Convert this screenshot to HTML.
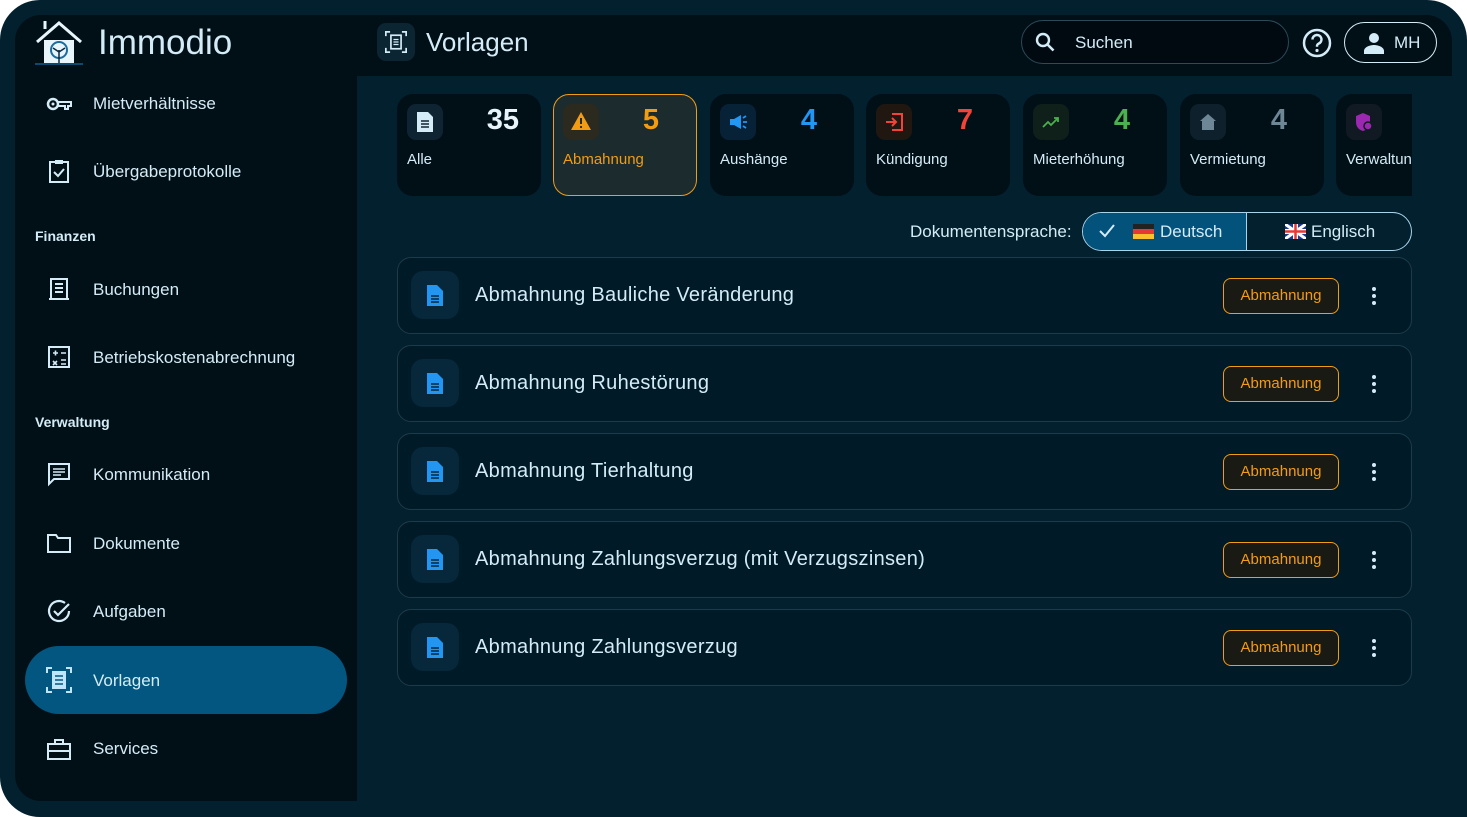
<!DOCTYPE html>
<html><head><meta charset="utf-8"><style>
*{box-sizing:border-box;margin:0;padding:0}
body{width:1467px;height:817px;background:#fff;font-family:"Liberation Sans",sans-serif;overflow:hidden;position:relative}
.frame{position:absolute;left:0;top:0;width:1467px;height:817px;background:#03202f;border-radius:40px}
.side{position:absolute;left:15px;top:15px;width:342px;height:786px;background:#010f17;border-radius:26px 0 0 26px}
.topbar{position:absolute;left:340px;top:15px;width:1112px;height:61px;background:#010f17;border-radius:0 26px 0 0}
.content{position:absolute;left:357px;top:76px;width:1110px;height:741px;background:#03202f;border-radius:40px 0 0 0}
.t{position:absolute;color:#d4ecf7;white-space:nowrap}
.nav{position:absolute;left:93px;font-size:17px;color:#d4ecf7}
.sec{position:absolute;left:35px;font-size:14px;font-weight:bold;color:#d4ecf7}
.ic{position:absolute;left:46px;width:26px;height:26px}
.card{position:absolute;top:94px;width:144px;height:102px;background:#010f17;border-radius:16px;overflow:hidden}
.card .ib{position:absolute;left:10px;top:10px;width:36px;height:36px;border-radius:9px}
.card .n{position:absolute;right:22px;top:10px;font-size:29px;font-weight:bold}
.card .l{position:absolute;left:10px;top:57px;font-size:15px;color:#d4ecf7}
.row{position:absolute;left:397px;width:1015px;height:77px;border:1.5px solid #1d3a4a;border-radius:14px;background:#011a27}
.row .ib{position:absolute;left:13px;top:13px;width:48px;height:48px;border-radius:12px;background:#07273a}
.row .tx{position:absolute;left:77px;top:26px;font-size:20px;color:#d4ecf7;letter-spacing:.3px}
.badge{position:absolute;left:825px;top:20px;width:116px;height:36px;border:1.5px solid #f39c12;border-radius:8px;background:#1a1a14;color:#f39c12;font-size:15px;text-align:center;line-height:33px}
.dots{position:absolute;left:974px;top:29px;width:4px}
.dots i{display:block;width:4px;height:4px;border-radius:2px;background:#d4ecf7;margin-bottom:3px}
</style></head><body>
<div class="frame"></div>
<div class="side"></div>
<div class="topbar"></div>
<div class="content"></div>

<!-- logo -->
<svg style="position:absolute;left:33px;top:18px" width="52" height="50" viewBox="0 0 52 50"><path d="M4 24 L26 5 L48 24" fill="none" stroke="#e8f6fc" stroke-width="3"/><rect x="11" y="22" width="30" height="24" fill="#e8f6fc"/><path d="M12 3v8" stroke="#e8f6fc" stroke-width="3"/><circle cx="26" cy="32" r="8" fill="none" stroke="#1b6da0" stroke-width="2"/><path d="M26 46v-14M20 30l6 4 6-4" stroke="#0a2a3f" stroke-width="1.5" fill="none"/><path d="M2 46h48" stroke="#0a4a70" stroke-width="2"/></svg>
<div class="t" style="left:98px;top:23px;font-size:35px;color:#d4ecf7">Immodio</div>

<!-- sidebar -->
<svg class="ic" style="top:91px" viewBox="0 0 26 26"><circle cx="7" cy="13" r="5" fill="none" stroke="#d4ecf7" stroke-width="2.5"/><circle cx="7" cy="13" r="1.5" fill="#d4ecf7"/><path d="M12 11h13v4h-3v3h-3v-3h-7z" fill="none" stroke="#d4ecf7" stroke-width="2"/></svg>
<div class="nav" style="top:94px">Mietverhältnisse</div>
<svg class="ic" style="top:158px" viewBox="0 0 26 26"><rect x="4" y="4" width="18" height="20" fill="none" stroke="#d4ecf7" stroke-width="2"/><rect x="9" y="2" width="8" height="4" fill="#d4ecf7"/><path d="M8 14l4 4 6-7" fill="none" stroke="#d4ecf7" stroke-width="2"/></svg>
<div class="nav" style="top:162px">Übergabeprotokolle</div>
<div class="sec" style="top:228px">Finanzen</div>
<svg class="ic" style="top:276px" viewBox="0 0 26 26"><rect x="5" y="3" width="16" height="20" fill="none" stroke="#d4ecf7" stroke-width="2"/><path d="M9 8h8M9 12h8M9 16h8M3 23h20" stroke="#d4ecf7" stroke-width="2"/></svg>
<div class="nav" style="top:280px">Buchungen</div>
<svg class="ic" style="top:344px" viewBox="0 0 26 26"><rect x="3" y="3" width="20" height="20" fill="none" stroke="#d4ecf7" stroke-width="2"/><path d="M7 9h5M9.5 6.5v5M15 9h5M7 17l4 4M11 17l-4 4M15 16h5M15 20h5" stroke="#d4ecf7" stroke-width="1.6"/></svg>
<div class="nav" style="top:348px">Betriebskostenabrechnung</div>
<div class="sec" style="top:414px">Verwaltung</div>
<svg class="ic" style="top:461px" viewBox="0 0 26 26"><path d="M3 3h20v15H8l-5 5z" fill="none" stroke="#d4ecf7" stroke-width="2"/><path d="M7 8h12M7 11h12M7 14h8" stroke="#d4ecf7" stroke-width="1.6"/></svg>
<div class="nav" style="top:465px">Kommunikation</div>
<svg class="ic" style="top:530px" viewBox="0 0 26 26"><path d="M2 5h8l2 3h12v14H2z" fill="none" stroke="#d4ecf7" stroke-width="2"/></svg>
<div class="nav" style="top:534px">Dokumente</div>
<svg class="ic" style="top:598px" viewBox="0 0 26 26"><path d="M23 13a10 10 0 1 1-4-8" fill="none" stroke="#d4ecf7" stroke-width="2.2"/><path d="M8 13l4 4 11-11" fill="none" stroke="#d4ecf7" stroke-width="2.2"/></svg>
<div class="nav" style="top:602px">Aufgaben</div>
<div style="position:absolute;left:25px;top:646px;width:322px;height:68px;border-radius:34px;background:#02567f"></div>
<svg class="ic" style="top:667px" viewBox="0 0 26 26"><path d="M1 6V1h5M20 1h5v5M25 20v5h-5M6 25H1v-5" fill="none" stroke="#bfe6f8" stroke-width="2"/><rect x="6" y="4" width="14" height="18" fill="#bfe6f8"/><path d="M9 9h8M9 13h8M9 17h8" stroke="#02567f" stroke-width="1.6"/></svg>
<div class="nav" style="top:671px">Vorlagen</div>
<svg class="ic" style="top:736px" viewBox="0 0 26 26"><rect x="2" y="8" width="22" height="15" fill="none" stroke="#d4ecf7" stroke-width="2"/><path d="M9 8V4h8v4M2 15h22" stroke="#d4ecf7" stroke-width="2" fill="none"/></svg>
<div class="nav" style="top:739px">Services</div>

<!-- top bar -->
<div style="position:absolute;left:377px;top:23px;width:38px;height:38px;border-radius:9px;background:#0c2533"></div>
<svg style="position:absolute;left:385px;top:31px" width="22" height="22" viewBox="0 0 26 26"><path d="M1 6V1h5M20 1h5v5M25 20v5h-5M6 25H1v-5" fill="none" stroke="#d4ecf7" stroke-width="2"/><rect x="7" y="5" width="12" height="16" fill="none" stroke="#d4ecf7" stroke-width="2"/><path d="M10 10h6M10 13h6M10 16h6" stroke="#d4ecf7" stroke-width="1.5"/></svg>
<div class="t" style="left:426px;top:27px;font-size:26px">Vorlagen</div>
<div style="position:absolute;left:1021px;top:20px;width:268px;height:44px;border:1.5px solid #2b4a5a;border-radius:22px;background:#000a10"></div>
<svg style="position:absolute;left:1034px;top:31px" width="22" height="22" viewBox="0 0 22 22"><circle cx="9" cy="9" r="6" fill="none" stroke="#d4ecf7" stroke-width="2.4"/><path d="M13.5 13.5l6 6" stroke="#d4ecf7" stroke-width="2.6"/></svg>
<div class="t" style="left:1075px;top:33px;font-size:17px">Suchen</div>
<svg style="position:absolute;left:1301px;top:27px" width="32" height="32" viewBox="0 0 32 32"><circle cx="16" cy="16" r="13" fill="none" stroke="#d4ecf7" stroke-width="2.5"/><path d="M11.5 12.5a4.5 4.5 0 1 1 6 4.2c-1.3.6-1.5 1.3-1.5 3" fill="none" stroke="#d4ecf7" stroke-width="2.5"/><circle cx="16" cy="23.5" r="1.6" fill="#d4ecf7"/></svg>
<div style="position:absolute;left:1344px;top:22px;width:93px;height:41px;border:1.5px solid #d4ecf7;border-radius:21px"></div>
<svg style="position:absolute;left:1362px;top:31px" width="24" height="24" viewBox="0 0 24 24"><circle cx="12" cy="7" r="5" fill="#d4ecf7"/><path d="M2 23v-3c0-4 6-6 10-6s10 2 10 6v3z" fill="#d4ecf7"/></svg>
<div class="t" style="left:1394px;top:33px;font-size:17px">MH</div>

<!-- category cards -->
<div style="position:absolute;left:397px;top:94px;width:1015px;height:102px;overflow:hidden">
</div>
<div class="card" style="left:397px"><div class="ib" style="background:#0f2432"></div><svg style="position:absolute;left:19px;top:17px" width="18" height="22" viewBox="0 0 18 22"><path d="M1 1h11l5 5v15H1z" fill="#d4ecf7"/><path d="M5 10h8M5 13h8M5 16h8" stroke="#0f2432" stroke-width="1.5"/></svg><div class="n" style="color:#e8f4fa">35</div><div class="l">Alle</div></div>
<div class="card" style="left:553px;background:#1b2b2e;border:1.5px solid #f39c12"><div class="ib" style="left:9px;top:9px;background:#2c2a1e"></div><svg style="position:absolute;left:16px;top:16px" width="22" height="20" viewBox="0 0 22 20"><path d="M11 1L21 19H1z" fill="#f39c12"/><path d="M11 7v6" stroke="#1b2b2e" stroke-width="2"/><circle cx="11" cy="16" r="1.1" fill="#1b2b2e"/></svg><div class="n" style="color:#f39c12;top:9px;right:37px">5</div><div class="l" style="color:#f39c12;left:9px;top:56px">Abmahnung</div></div>
<div class="card" style="left:710px"><div class="ib" style="background:#072236"></div><svg style="position:absolute;left:18px;top:19px" width="20" height="18" viewBox="0 0 20 18"><path d="M2 6h4l7-4v14l-7-4H2z" fill="#2196f3"/><path d="M15 5l3-2M15 9h4M15 13l3 2" stroke="#2196f3" stroke-width="1.8"/></svg><div class="n" style="color:#2196f3;right:37px">4</div><div class="l">Aushänge</div></div>
<div class="card" style="left:866px"><div class="ib" style="background:#201810"></div><svg style="position:absolute;left:18px;top:18px" width="20" height="20" viewBox="0 0 20 20"><path d="M8 2h10v16H8" fill="none" stroke="#f44336" stroke-width="2"/><path d="M2 10h10M8 6l4 4-4 4" fill="none" stroke="#f44336" stroke-width="2"/></svg><div class="n" style="color:#f44336;right:37px">7</div><div class="l">Kündigung</div></div>
<div class="card" style="left:1023px"><div class="ib" style="background:#0f1f1a"></div><svg style="position:absolute;left:18px;top:20px" width="20" height="16" viewBox="0 0 20 16"><path d="M2 13l5-5 3 3 7-7M13 4h4v4" fill="none" stroke="#4caf50" stroke-width="1.8"/></svg><div class="n" style="color:#4caf50;right:37px">4</div><div class="l">Mieterhöhung</div></div>
<div class="card" style="left:1180px"><div class="ib" style="background:#0e202c"></div><svg style="position:absolute;left:19px;top:19px" width="18" height="18" viewBox="0 0 18 18"><path d="M9 1l8 7h-2v9H3V8H1z" fill="#6d8797"/></svg><div class="n" style="color:#6d8797;right:37px">4</div><div class="l">Vermietung</div></div>
<div style="position:absolute;left:1336px;top:94px;width:76px;height:102px;overflow:hidden"><div class="card" style="left:0;top:0"><div class="ib" style="background:#111a22"></div><svg style="position:absolute;left:18px;top:18px" width="20" height="20" viewBox="0 0 20 20"><path d="M9 1l7 3v6c0 5-3 8-7 9-4-1-7-4-7-9V4z" fill="#9c27b0"/><circle cx="14" cy="14" r="4" fill="#9c27b0" stroke="#111a22" stroke-width="1.5"/></svg><div class="l">Verwaltung</div></div></div>

<!-- language -->
<div class="t" style="left:910px;top:222px;font-size:17px">Dokumentensprache:</div>
<div style="position:absolute;left:1082px;top:212px;width:330px;height:39px;border:1.5px solid #a8d4ea;border-radius:20px;overflow:hidden">
<div style="position:absolute;left:0;top:0;width:164px;height:39px;background:#02527c;border-right:1.5px solid #a8d4ea"></div>
</div>
<svg style="position:absolute;left:1098px;top:223px" width="18" height="16" viewBox="0 0 18 16"><path d="M2 8l5 5 9-11" fill="none" stroke="#d4ecf7" stroke-width="2"/></svg>
<svg style="position:absolute;left:1133px;top:224px" width="21" height="15" viewBox="0 0 21 15"><rect width="21" height="5" fill="#222"/><rect y="5" width="21" height="5" fill="#e53935"/><rect y="10" width="21" height="5" fill="#fbc02d"/></svg>
<div class="t" style="left:1160px;top:222px;font-size:17px">Deutsch</div>
<svg style="position:absolute;left:1285px;top:224px" width="21" height="15" viewBox="0 0 21 15"><rect width="21" height="15" fill="#1a3a8a"/><path d="M0 0l21 15M21 0L0 15" stroke="#fff" stroke-width="3"/><path d="M10.5 0v15M0 7.5h21" stroke="#fff" stroke-width="5"/><path d="M10.5 0v15M0 7.5h21" stroke="#e53935" stroke-width="2.5"/></svg>
<div class="t" style="left:1311px;top:222px;font-size:17px">Englisch</div>

<!-- rows -->
<div class="row" style="top:257px"><div class="ib"></div><svg style="position:absolute;left:29px;top:27px" width="16" height="21" viewBox="0 0 16 21"><path d="M0 0h10l6 6v15H0z" fill="#2196f3"/><path d="M4 11h8M4 14h8M4 17h8" stroke="#07273a" stroke-width="1.4"/></svg><div class="tx">Abmahnung Bauliche Veränderung</div><div class="badge">Abmahnung</div><div class="dots"><i></i><i></i><i></i></div></div>
<div class="row" style="top:345px"><div class="ib"></div><svg style="position:absolute;left:29px;top:27px" width="16" height="21" viewBox="0 0 16 21"><path d="M0 0h10l6 6v15H0z" fill="#2196f3"/><path d="M4 11h8M4 14h8M4 17h8" stroke="#07273a" stroke-width="1.4"/></svg><div class="tx">Abmahnung Ruhestörung</div><div class="badge">Abmahnung</div><div class="dots"><i></i><i></i><i></i></div></div>
<div class="row" style="top:433px"><div class="ib"></div><svg style="position:absolute;left:29px;top:27px" width="16" height="21" viewBox="0 0 16 21"><path d="M0 0h10l6 6v15H0z" fill="#2196f3"/><path d="M4 11h8M4 14h8M4 17h8" stroke="#07273a" stroke-width="1.4"/></svg><div class="tx">Abmahnung Tierhaltung</div><div class="badge">Abmahnung</div><div class="dots"><i></i><i></i><i></i></div></div>
<div class="row" style="top:521px"><div class="ib"></div><svg style="position:absolute;left:29px;top:27px" width="16" height="21" viewBox="0 0 16 21"><path d="M0 0h10l6 6v15H0z" fill="#2196f3"/><path d="M4 11h8M4 14h8M4 17h8" stroke="#07273a" stroke-width="1.4"/></svg><div class="tx">Abmahnung Zahlungsverzug (mit Verzugszinsen)</div><div class="badge">Abmahnung</div><div class="dots"><i></i><i></i><i></i></div></div>
<div class="row" style="top:609px"><div class="ib"></div><svg style="position:absolute;left:29px;top:27px" width="16" height="21" viewBox="0 0 16 21"><path d="M0 0h10l6 6v15H0z" fill="#2196f3"/><path d="M4 11h8M4 14h8M4 17h8" stroke="#07273a" stroke-width="1.4"/></svg><div class="tx">Abmahnung Zahlungsverzug</div><div class="badge">Abmahnung</div><div class="dots"><i></i><i></i><i></i></div></div>
</body></html>
